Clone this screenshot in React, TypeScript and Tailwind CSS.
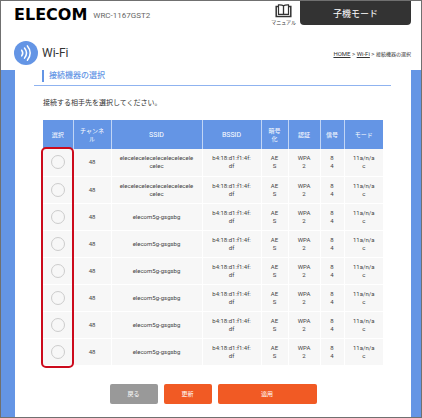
import { useState } from 'react'

interface Device { channel: string; ssid: string; bssid: string; cipher: string; auth: string; signal: string; mode: string }

const common = { channel: '48', bssid: 'b4:18:d1:f1:4f:\ndf', cipher: 'AE\nS', auth: 'WPA\n2', signal: '8\n4', mode: '11a/n/a\nc' }
const longSsid = 'elecelecelecelecelecelecele\ncelec'
const shortSsid = 'elecom5g-gsgsbg'

const devices: Device[] = [longSsid, longSsid, shortSsid, shortSsid, shortSsid, shortSsid, shortSsid, shortSsid].map((ssid) => ({ ...common, ssid }))

const columns = [
  { label: '選択', style: 'w-[30px]' },
  { label: 'チャンネ\nル', style: 'w-[38px]' },
  { label: 'SSID', style: 'text-[7px]' },
  { label: 'BSSID', style: 'w-[59px] text-[7px]' },
  { label: '暗号\n化', style: 'w-[27px]' },
  { label: '認証', style: 'w-[32px]' },
  { label: '信号', style: 'w-[24px]' },
  { label: 'モード', style: 'w-[39px]' },
]

function BookIcon() {
  return (
    <svg viewBox="0 0 17 14" className="h-[14px] w-[17px]" fill="none" stroke="#333" aria-hidden="true">
      <path d="M8.500 1.800C7.500 1 5.500 .7 3.500 .8V10.300H8.500H13.500V.8C11.500 .7 9.500 1 8.500 1.800Z" strokeWidth="1.200" />
      <path d="M8.500 1.800V11" strokeWidth="1.300" />
      <path d="M3.500 2.500H1.200V12.500H15.800V2.500H13.500" strokeWidth="1.500" />
    </svg>
  )
}

function WifiIcon() {
  return (
    <svg viewBox="0 0 24 24" className="size-6 shrink-0" fill="none" stroke="#fff" strokeLinecap="round" aria-hidden="true">
      <circle cx="12" cy="12" r="12" fill="#6495e5" stroke="none" />
      <path d="M7.700 9.200C9 10.900 9 13.200 7.700 14.900" strokeWidth="1.500" />
      <path d="M10.500 7C12.900 10 12.900 14.100 10.500 17.100" strokeWidth="1.500" />
      <path d="M13.400 4.900C17.100 9.200 17.100 14.900 13.400 19.200" strokeWidth="1.500" />
    </svg>
  )
}

function DeviceTable() {
  const [selected, setSelected] = useState<number | null>(null)

  return (
    <div className="relative">
      <table className="w-full table-fixed border-collapse text-center text-[6px] leading-[8px] text-[#444]">
        <thead>
          <tr className="h-[29px] bg-[#6495e5] text-white">
            {columns.map((col) => (
              <th key={col.label} className={`${col.style} border-r border-[#c1d5f5] p-0 font-normal whitespace-pre-line last:border-r-0`}>{col.label}</th>
            ))}
          </tr>
        </thead>
        <tbody>
          {devices.map((d, i) => (
            <tr key={i} className="h-[27px] border-b border-white bg-[#f7f7f7]">
              <td className="border-r border-white p-0">
                <input type="radio" name="device" aria-label={`選択 ${i + 1}`} checked={selected === i} onChange={() => setSelected(i)}
                  className="mx-auto block size-[14px] appearance-none rounded-full border border-[#ccc] checked:bg-[#6495e5]" />
              </td>
              {[d.channel, d.ssid, d.bssid, d.cipher, d.auth, d.signal, d.mode].map((value, j) => (
                <td key={j} className="border-r border-white p-0 whitespace-pre-line last:border-r-0">{value}</td>
              ))}
            </tr>
          ))}
        </tbody>
      </table>
      {/* frame around the radio column */}
      <div className="pointer-events-none absolute top-[27px] -bottom-0.5 -left-0.5 w-[33px] rounded-[5px] border-2 border-[#cc0a1c]" />
    </div>
  )
}

export default function App() {
  return (
    <div lang="ja" className="border border-[#707070] bg-white font-[Roboto,'Noto_Sans_CJK_JP',sans-serif] text-[#333]">
      <header className="flex h-10 items-start pr-2.5 pl-[13px]">
        <h1 className="mt-1.5 font-['DejaVu_Sans',sans-serif] text-[16px] leading-4 font-bold text-black">ELECOM</h1>
        <span className="mt-[9px] ml-1.5 text-[8px] leading-3 text-[#666]">WRC-1167GST2</span>
        <a href="#manual" className="mt-[3px] mr-1 ml-auto flex flex-col items-center text-[5px] leading-[8px]">
          <BookIcon />
          マニュアル
        </a>
        <div className="h-6 w-[111px] rounded-b-[4px] bg-[#333] text-center text-[9px] leading-[26px] text-white">子機モード</div>
      </header>

      <div className="flex h-[29px] items-start pr-2.5 pl-[13px]">
        <WifiIcon />
        <h2 className="ml-1 text-[12px] leading-6">Wi-Fi</h2>
        <nav className="mt-2 ml-auto text-[6px] leading-[10px] whitespace-nowrap">
          <a href="#home" className="underline">HOME</a> &gt; <a href="#wifi" className="underline">Wi-Fi</a> &gt; <span className="text-[5px]">接続機器の選択</span>
        </nav>
      </div>

      <div className="border-r-10 border-l-14 border-[#6495e5] pb-[13px]">
        <div className="mr-5 ml-[19px] h-4 border-b border-b-[#8fb3f0] pl-2">
          <h3 className="border-l-2 border-[#6495e5] pl-[5px] text-[8px] leading-[12px] font-medium text-[#6495e5]">接続機器の選択</h3>
        </div>
        <main className="mx-7">
          <p className="pt-3 pb-[11px] text-[7px] leading-[11px]">接続する相手先を選択してください。</p>
          <DeviceTable />
          <div className="mt-[18px] flex justify-center gap-1.5 text-[6px] leading-5 text-white">
            <button type="button" className="w-12 rounded-[2px] bg-[#999]">戻る</button>
            <button type="button" className="w-12 rounded-[2px] bg-[#f15a24]">更新</button>
            <button type="button" className="w-[99px] rounded-[2px] bg-[#f15a24]">適用</button>
          </div>
        </main>
      </div>
    </div>
  )
}
